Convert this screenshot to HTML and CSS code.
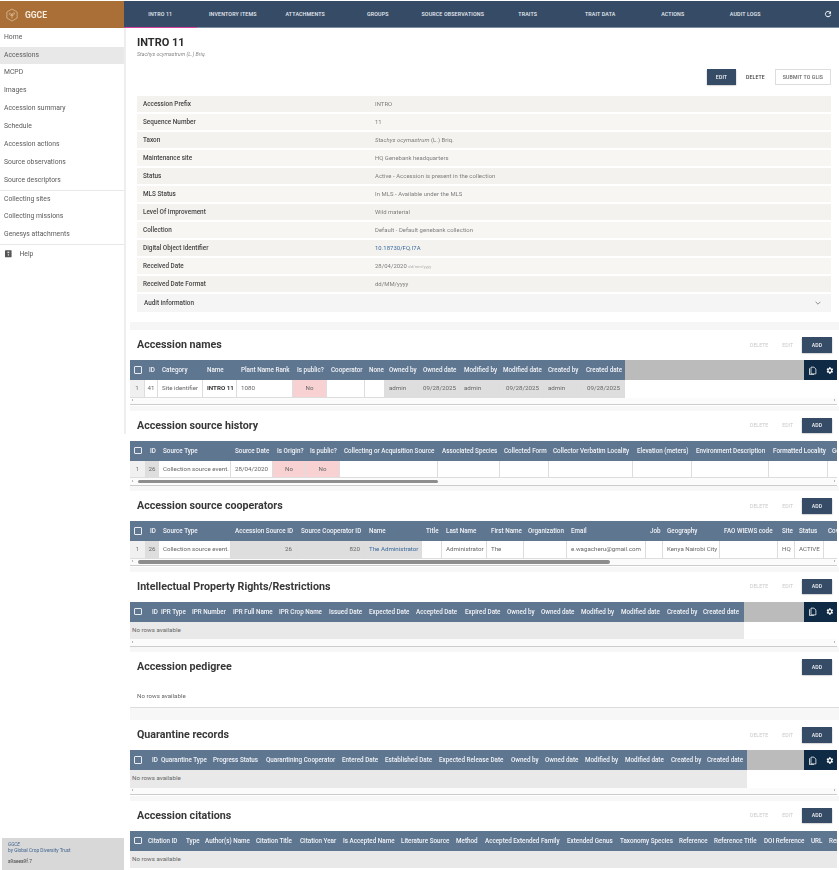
FILE: index.html
```html
<!DOCTYPE html>
<html lang="en">
<head>
<meta charset="utf-8">
<title>INTRO 11 - GGCE</title>
<link rel="stylesheet" href="styles.css">
</head>
<body>
<div class="app">
  <header class="topbar">
    <div class="brand">
      <svg class="brand-logo" viewBox="0 0 14 16"><path d="M7 1 13 4.500V11.500L7 15 1 11.500V4.500Z" fill="none" stroke="#e3c8a6" stroke-width=".8"/><path d="M7 12V6.500M7 9C5 9 4 7.500 4 6 6 6 7 7 7 9ZM7 8.500C9 8.500 10 7 10 5.500 8 5.500 7 6.500 7 8.500Z" fill="none" stroke="#e3c8a6" stroke-width=".7"/></svg>
      <span>GGCE</span>
    </div>
    <nav class="tabs">
      <a class="tab tab-active">INTRO 11</a>
      <a class="tab">INVENTORY ITEMS</a>
      <a class="tab">ATTACHMENTS</a>
      <a class="tab">GROUPS</a>
      <a class="tab tab-wide">SOURCE OBSERVATIONS</a>
      <a class="tab">TRAITS</a>
      <a class="tab">TRAIT DATA</a>
      <a class="tab">ACTIONS</a>
      <a class="tab">AUDIT LOGS</a>
      <svg class="refresh" viewBox="0 0 24 24"><path d="M19 8A8 8 0 1 0 20 14" fill="none" stroke="#fff" stroke-width="3"/><path d="M21 3v8h-8z" fill="#fff"/></svg>
    </nav>
  </header>
  <div class="body">
    <aside class="sidebar">
      <ul class="menu">
        <li class="item">Home</li>
        <li class="item item-active">Accessions</li>
        <li class="item">MCPD</li>
        <li class="item">Images</li>
        <li class="item">Accession summary</li>
        <li class="item">Schedule</li>
        <li class="item">Accession actions</li>
        <li class="item">Source observations</li>
        <li class="item">Source descriptors</li>
        <li class="item item-split">Collecting sites</li>
        <li class="item">Collecting missions</li>
        <li class="item">Genesys attachments</li>
        <li class="item item-split item-help">
          <svg class="help-icon" viewBox="0 0 8 8"><rect width="7" height="7.500" rx=".6" fill="#555"/><rect x="2.600" y="1.500" width="2" height="1.600" fill="#ddd"/><rect x="3" y="4.200" width="1.300" height="1.500" fill="#ddd"/></svg>
          Help
        </li>
      </ul>
      <div class="foot">
        <div class="foot-name">GGCE</div>
        <div class="foot-org">by Global Crop Diversity Trust</div>
        <div class="foot-ver">a9aeea9f.7</div>
      </div>
    </aside>
    <main class="main">
      <section class="summary">
        <h1 class="page-title">INTRO 11</h1>
        <div class="page-sub">Stachys ocymastrum (L.) Briq.</div>
        <div class="page-actions">
          <button class="btn btn-main btn-edit">EDIT</button>
          <button class="btn btn-text">DELETE</button>
          <button class="btn btn-line">SUBMIT TO GLIS</button>
        </div>
        <dl class="facts">
          <div class="fact"><dt>Accession Prefix</dt><dd>INTRO</dd></div>
          <div class="fact"><dt>Sequence Number</dt><dd>11</dd></div>
          <div class="fact"><dt>Taxon</dt><dd><i>Stachys ocymastrum</i> (L.) Briq.</dd></div>
          <div class="fact"><dt>Maintenance site</dt><dd>HQ Genebank headquarters</dd></div>
          <div class="fact"><dt>Status</dt><dd>Active - Accession is present in the collection</dd></div>
          <div class="fact"><dt>MLS Status</dt><dd>In MLS - Available under the MLS</dd></div>
          <div class="fact"><dt>Level Of Improvement</dt><dd>Wild material</dd></div>
          <div class="fact"><dt>Collection</dt><dd>Default - Default genebank collection</dd></div>
          <div class="fact"><dt>Digital Object Identifier</dt><dd class="link">10.18730/FQ.I7A</dd></div>
          <div class="fact"><dt>Received Date</dt><dd>28/04/2020 <small>dd/mm/yyyy</small></dd></div>
          <div class="fact"><dt>Received Date Format</dt><dd>dd/MM/yyyy</dd></div>
        </dl>
        <div class="audit">Audit information
          <svg class="chev" viewBox="0 0 10 6"><path d="M1 1l4 4 4-4" fill="none" stroke="#666" stroke-width="1.200"/></svg>
        </div>
      </section>

      <section class="panel">
        <div class="panel-bar"><h2>Accession names</h2><span class="off off-del">DELETE</span><span class="off">EDIT</span><button class="btn btn-main btn-add">ADD</button></div>
        <div class="tbl">
          <div class="row head cols-names">
            <div class="hc"><span class="check"></span></div><div class="hc">ID</div><div class="hc">Category</div><div class="hc">Name</div><div class="hc">Plant Name Rank</div><div class="hc">Is public?</div><div class="hc">Cooperator</div><div class="hc">None</div><div class="hc">Owned by</div><div class="hc">Owned date</div><div class="hc">Modified by</div><div class="hc">Modified date</div><div class="hc">Created by</div><div class="hc">Created date</div>
          </div>
          <div class="row cols-names">
            <div class="c num">1</div><div class="c mid">41</div><div class="c">Site identifier</div><div class="c strong">INTRO 11</div><div class="c">1080</div><div class="c no">No</div><div class="c"></div><div class="c"></div><div class="c ro">admin</div><div class="c ro end">09/28/2025</div><div class="c ro">admin</div><div class="c ro end">09/28/2025</div><div class="c ro">admin</div><div class="c ro end">09/28/2025</div>
          </div>
          <div class="tools"><svg viewBox="0 0 12 12"><path d="M4 1.500h4l2.500 2.500v6.500H4z" fill="none" stroke="#fff"/><path d="M2 3v8.500h6" fill="none" stroke="#fff"/></svg><svg viewBox="0 0 24 24"><path fill="#fff" d="M19.400 13a7.500 7.500 0 0 0 0-2l2.100-1.600-2-3.500-2.500 1a7.500 7.500 0 0 0-1.700-1L15 3.200h-4l-.4 2.700a7.500 7.500 0 0 0-1.700 1l-2.500-1-2 3.500L6.500 11a7.500 7.500 0 0 0 0 2l-2.100 1.600 2 3.500 2.500-1a7.500 7.500 0 0 0 1.700 1l.4 2.700h4l.4-2.700a7.500 7.500 0 0 0 1.700-1l2.500 1 2-3.500zM13 15.500a3.500 3.500 0 1 1 0-7 3.500 3.500 0 0 1 0 7z"/></svg></div>
        </div>
        <div class="sbar"><span class="arr arr-l"></span><span class="arr arr-r"></span></div>
      </section>

      <section class="panel">
        <div class="panel-bar"><h2>Accession source history</h2><span class="off off-del">DELETE</span><span class="off">EDIT</span><button class="btn btn-main btn-add">ADD</button></div>
        <div class="tbl">
          <div class="row head cols-history">
            <div class="hc"><span class="check"></span></div><div class="hc">ID</div><div class="hc">Source Type</div><div class="hc">Source Date</div><div class="hc">Is Origin?</div><div class="hc">Is public?</div><div class="hc">Collecting or Acquisition Source</div><div class="hc">Associated Species</div><div class="hc">Collected Form</div><div class="hc">Collector Verbatim Locality</div><div class="hc">Elevation (meters)</div><div class="hc">Environment Description</div><div class="hc">Formatted Locality</div><div class="hc">Geo</div>
          </div>
          <div class="row cols-history">
            <div class="c num">1</div><div class="c ro mid">26</div><div class="c">Collection source event.</div><div class="c">28/04/2020</div><div class="c no">No</div><div class="c no">No</div><div class="c"></div><div class="c"></div><div class="c"></div><div class="c"></div><div class="c"></div><div class="c"></div><div class="c"></div><div class="c"></div>
          </div>
        </div>
        <div class="sbar"><span class="arr arr-l"></span><span class="thumb thumb-history"></span><span class="arr arr-r"></span></div>
      </section>

      <section class="panel">
        <div class="panel-bar"><h2>Accession source cooperators</h2><span class="off off-del">DELETE</span><span class="off">EDIT</span><button class="btn btn-main btn-add">ADD</button></div>
        <div class="tbl">
          <div class="row head cols-coop">
            <div class="hc"><span class="check"></span></div><div class="hc">ID</div><div class="hc">Source Type</div><div class="hc">Accession Source ID</div><div class="hc">Source Cooperator ID</div><div class="hc">Name</div><div class="hc">Title</div><div class="hc">Last Name</div><div class="hc">First Name</div><div class="hc">Organization</div><div class="hc">Email</div><div class="hc">Job</div><div class="hc">Geography</div><div class="hc">FAO WIEWS code</div><div class="hc">Site</div><div class="hc">Status</div><div class="hc">Coverage</div>
          </div>
          <div class="row cols-coop">
            <div class="c num">1</div><div class="c ro mid">26</div><div class="c">Collection source event.</div><div class="c ro end">26</div><div class="c ro end">820</div><div class="c ro link">The Administrator</div><div class="c"></div><div class="c">Administrator</div><div class="c">The</div><div class="c"></div><div class="c">e.wagacheru@gmail.com</div><div class="c"></div><div class="c">Kenya Nairobi City</div><div class="c"></div><div class="c">HQ</div><div class="c">ACTIVE</div><div class="c"></div>
          </div>
        </div>
        <div class="sbar"><span class="arr arr-l"></span><span class="thumb thumb-coop"></span><span class="arr arr-r"></span></div>
      </section>

      <section class="panel">
        <div class="panel-bar"><h2>Intellectual Property Rights/Restrictions</h2><span class="off off-del">DELETE</span><span class="off">EDIT</span><button class="btn btn-main btn-add">ADD</button></div>
        <div class="tbl">
          <div class="row head cols-ipr">
            <div class="hc"><span class="check"></span></div><div class="hc">ID</div><div class="hc">IPR Type</div><div class="hc">IPR Number</div><div class="hc">IPR Full Name</div><div class="hc">IPR Crop Name</div><div class="hc">Issued Date</div><div class="hc">Expected Date</div><div class="hc">Accepted Date</div><div class="hc">Expired Date</div><div class="hc">Owned by</div><div class="hc">Owned date</div><div class="hc">Modified by</div><div class="hc">Modified date</div><div class="hc">Created by</div><div class="hc">Created date</div>
          </div>
          <div class="row cols-ipr"><div class="empty">No rows available</div></div>
          <div class="tools"><svg viewBox="0 0 12 12"><path d="M4 1.500h4l2.500 2.500v6.500H4z" fill="none" stroke="#fff"/><path d="M2 3v8.500h6" fill="none" stroke="#fff"/></svg><svg viewBox="0 0 24 24"><path fill="#fff" d="M19.400 13a7.500 7.500 0 0 0 0-2l2.100-1.600-2-3.500-2.500 1a7.500 7.500 0 0 0-1.700-1L15 3.200h-4l-.4 2.700a7.500 7.500 0 0 0-1.700 1l-2.500-1-2 3.500L6.500 11a7.500 7.500 0 0 0 0 2l-2.100 1.600 2 3.500 2.500-1a7.500 7.500 0 0 0 1.700 1l.4 2.700h4l.4-2.700a7.500 7.500 0 0 0 1.700-1l2.500 1 2-3.500zM13 15.500a3.500 3.500 0 1 1 0-7 3.500 3.500 0 0 1 0 7z"/></svg></div>
        </div>
        <div class="sbar"><span class="arr arr-l"></span><span class="arr arr-r"></span></div>
      </section>

      <section class="panel panel-plain">
        <div class="panel-bar"><h2>Accession pedigree</h2><button class="btn btn-main btn-add">ADD</button></div>
        <p class="plain-empty">No rows available</p>
      </section>

      <section class="panel">
        <div class="panel-bar"><h2>Quarantine records</h2><span class="off off-del">DELETE</span><span class="off">EDIT</span><button class="btn btn-main btn-add">ADD</button></div>
        <div class="tbl">
          <div class="row head cols-quar">
            <div class="hc"><span class="check"></span></div><div class="hc">ID</div><div class="hc">Quarantine Type</div><div class="hc">Progress Status</div><div class="hc">Quarantining Cooperator</div><div class="hc">Entered Date</div><div class="hc">Established Date</div><div class="hc">Expected Release Date</div><div class="hc">Owned by</div><div class="hc">Owned date</div><div class="hc">Modified by</div><div class="hc">Modified date</div><div class="hc">Created by</div><div class="hc">Created date</div>
          </div>
          <div class="row cols-quar"><div class="empty">No rows available</div></div>
          <div class="tools"><svg viewBox="0 0 12 12"><path d="M4 1.500h4l2.500 2.500v6.500H4z" fill="none" stroke="#fff"/><path d="M2 3v8.500h6" fill="none" stroke="#fff"/></svg><svg viewBox="0 0 24 24"><path fill="#fff" d="M19.400 13a7.500 7.500 0 0 0 0-2l2.100-1.600-2-3.500-2.500 1a7.500 7.500 0 0 0-1.700-1L15 3.200h-4l-.4 2.700a7.500 7.500 0 0 0-1.700 1l-2.500-1-2 3.500L6.500 11a7.500 7.500 0 0 0 0 2l-2.100 1.600 2 3.500 2.500-1a7.500 7.500 0 0 0 1.700 1l.4 2.700h4l.4-2.700a7.500 7.500 0 0 0 1.700-1l2.500 1 2-3.500zM13 15.500a3.500 3.500 0 1 1 0-7 3.500 3.500 0 0 1 0 7z"/></svg></div>
        </div>
        <div class="sbar"><span class="arr arr-l"></span><span class="arr arr-r"></span></div>
      </section>

      <section class="panel">
        <div class="panel-bar"><h2>Accession citations</h2><span class="off off-del">DELETE</span><span class="off">EDIT</span><button class="btn btn-main btn-add">ADD</button></div>
        <div class="tbl">
          <div class="row head cols-cite">
            <div class="hc"><span class="check"></span></div><div class="hc">Citation ID</div><div class="hc">Type</div><div class="hc">Author(s) Name</div><div class="hc">Citation Title</div><div class="hc">Citation Year</div><div class="hc">Is Accepted Name</div><div class="hc">Literature Source</div><div class="hc">Method</div><div class="hc">Accepted Extended Family</div><div class="hc">Extended Genus</div><div class="hc">Taxonomy Species</div><div class="hc">Reference</div><div class="hc">Reference Title</div><div class="hc">DOI Reference</div><div class="hc">URL</div><div class="hc">Remarks</div>
          </div>
          <div class="row cols-cite"><div class="empty">No rows available</div></div>
        </div>
      </section>
    </main>
  </div>
</div>
</body>
</html>
```
FILE: styles.css
```css
* { box-sizing: border-box; }
html, body { margin: 0; height: 870px; overflow: hidden; background: #fff; }
body { font-family: Roboto, "Liberation Sans", sans-serif; color: #555; }
.app { height: 870px; display: flex; flex-direction: column; filter: blur(.5px); }

.topbar { display: flex; height: 27px; margin-top: 1px; flex: none; }
.brand { width: 124px; background: #a96f37; display: flex; align-items: center; gap: 7px; padding-left: 6px; color: #f6ecdf; font-size: 8.500px; font-weight: 700; }
.brand-logo { width: 12px; height: 14px; }
.tabs { flex: 1; display: flex; background: #354b66; border-bottom: 1px solid #7d8ea3; position: relative; }
.tab { width: 72.500px; display: flex; align-items: center; justify-content: center; color: #e9edf2; font-size: 5.300px; font-weight: 500; letter-spacing: .15px; white-space: nowrap; padding-bottom: 1px; }
.tab-wide { width: 77.500px; }
.tab-active { border-bottom: 1.500px solid #d83f9a; margin-bottom: -1px; padding-bottom: 1px; }
.refresh { width: 8px; height: 8px; margin: 9px 7px 0 auto; }

.body { flex: 1; display: flex; min-height: 0; }
.sidebar { width: 124px; flex: none; display: flex; flex-direction: column; justify-content: space-between; }
.menu { list-style: none; margin: 0; padding: .7px 0 0; }
.item { height: 17.900px; line-height: 17.900px; padding-left: 4px; font-size: 6.800px; color: #5a5a5a; white-space: nowrap; }
.item-active { background: #e8e8e8; }
.item-split { border-top: 1px solid #e8e8e8; height: 18.500px; }
.item-help { display: flex; align-items: center; gap: 7px; padding-left: 5px; height: 20px; }
.help-icon { width: 7.500px; height: 8px; }
.foot { margin-left: 2px; height: 32px; background: #d8d8d8; padding: 4px 6px; font-size: 4.800px; line-height: 8px; color: #3f6490; }
.foot-name { font-style: italic; line-height: 5px; }
.foot-ver { color: #444; margin-top: 3px; }

.main { flex: 1; min-width: 0; padding-left: 6px; background: linear-gradient(#eee, #eee) 0 0 / 2px 406px no-repeat; }
.summary { padding: 8px 8px 10px 7px; border-bottom: 8px solid #f6f6f6; height: 302px; }
.page-title { margin: 0; font-size: 11px; line-height: 14px; font-weight: 700; color: #2c2c2c; }
.page-sub { font-size: 5.300px; line-height: 7px; margin-top: 1px; font-style: italic; color: #888; }
.page-actions { display: flex; justify-content: flex-end; align-items: center; margin: 11px 0 11.500px; height: 15.500px; }
.btn { font: 500 5.200px Roboto, sans-serif; border: 0; padding: 0; height: 15.500px; letter-spacing: .1px; }
.btn-main { background: #354b66; color: #f2f4f7; box-shadow: 0 .5px 1.500px rgba(0,0,0,.4); }
.btn-edit { width: 29px; }
.btn-text { width: 39px; background: none; color: #444; }
.btn-line { width: 56px; background: #fff; color: #666; border: 1px solid #ddd; }
.btn-add { width: 30px; margin-left: 9px; }
.facts { margin: 0; display: flex; flex-direction: column; gap: 2px; }
.fact { display: flex; height: 16px; align-items: center; background: #f7f6f3; padding-left: 6px; font-size: 5.900px; }
.fact:nth-child(odd) { background: #f3f2ee; }
.fact dt { width: 232px; flex: none; font-size: 6.400px; font-weight: 500; color: #444; }
.fact dd { margin: 0; color: #7d7d7d; letter-spacing: .05px; }
.fact small { font-size: 4px; color: #aaa; }
.link { color: #3b6a9b !important; }
.audit { height: 18px; margin-top: 2px; background: #f5f5f5; display: flex; align-items: center; justify-content: space-between; padding: 0 10px 0 7px; font-size: 6.400px; font-weight: 500; color: #444; }
.chev { width: 6px; height: 4px; }

.panel { height: 80.500px; border-bottom: 5.500px solid #f7f7f7; padding-top: 7px; }
.panel:last-child { border: 0; }
.panel-plain { height: 68px; border-bottom-width: 12px; }
.panel-plain::after { content: ""; display: block; height: 1px; background: #ddd; margin-top: 7.500px; }
.panel-bar { display: flex; align-items: center; height: 15.500px; margin-bottom: 7.500px; padding: 0 7px; }
.panel-bar h2 { margin: 0 auto 0 0; font-size: 10.700px; font-weight: 700; color: #383838; white-space: nowrap; }
.off { font-size: 5.200px; color: #c9c9c9; margin-left: 9px; }
.off-del { margin-left: 0; margin-right: 5px; }

.tbl { position: relative; width: 707px; overflow: hidden; }
.row { display: grid; }
.head { height: 20px; background: #bbb; }
.cols-names { grid-template-columns: 15px 13px 45px 34px 56px 34px 38px 20px 34px 41px 39px 45px 38px 43px; }
.cols-history { grid-template-columns: 16px 13px 72px 42px 33px 34px 98px 62px 49px 84px 59px 77px 59px 60px; }
.cols-coop { grid-template-columns: 16px 13px 72px 66px 68px 57px 20px 45px 37px 43px 79px 17px 57px 58px 17px 29px 50px; }
.cols-ipr { grid-template-columns: 19px 9px 31px 41px 46px 50px 40px 47px 49px 42px 34px 40px 40px 46px 36px 44px; }
.cols-quar { grid-template-columns: 19px 9px 52px 53px 76px 43px 54px 72px 34px 40px 40px 46px 36px 43px; }
.cols-cite { grid-template-columns: 15px 38px 19px 51px 44px 43px 58px 55px 29px 82px 53px 59px 35px 50px 47px 18px 74px; }
.hc { background: #5f7691; color: #f2f4f7; font-size: 6.300px; font-weight: 500; display: flex; align-items: center; padding-left: 3px; white-space: nowrap; overflow: hidden; }
.cols-names .hc, .cols-history .hc, .cols-coop .hc { padding-left: 4px; }
.hc:first-child { padding-left: 3px !important; }
.check { width: 7.500px; height: 7.500px; border: 1px solid #e8ecf1; border-radius: 1px; margin-left: 1px; flex: none; }
.c { height: 17.500px; line-height: 16.500px; font-size: 6.200px; padding: 0 4px; background: #fff; color: #666; border-right: 1px solid #ddd; border-bottom: 1px solid #ddd; white-space: nowrap; overflow: hidden; }
.num { background: #f0f0f0; text-align: center; color: #777; padding: 0; }
.mid { text-align: center; padding: 0; }
.end { text-align: right; }
.ro { background: #dedede; }
.no { background: #f8d2d2; text-align: center; }
.strong { font-weight: 700; color: #333; }
.empty { grid-column: 1 / -1; height: 17.500px; line-height: 17.500px; padding-left: 2px; font-size: 6.200px; background: #e9e9e9; color: #666; }
.tools { position: absolute; right: 0; top: 0; width: 33px; height: 20px; background: #0f2a44; display: flex; align-items: center; justify-content: space-between; padding: 0 3px 0 4px; }
.tools svg { width: 9px; height: 9px; }

.sbar { position: relative; width: 707px; height: 7.500px; border-bottom: 1px solid #ccc; background: #fbfbfb; }
.arr { position: absolute; top: 1.500px; width: 0; height: 0; border: 1.500px solid transparent; }
.arr-l { left: 1px; border-right-color: #777; }
.arr-r { right: 1px; border-left-color: #777; }
.thumb { position: absolute; left: 8px; top: 1.500px; height: 3.500px; border-radius: 2px; background: #8d8d8d; }
.thumb-history { width: 300px; }
.thumb-coop { width: 472px; }
.plain-empty { margin: 0; padding: 10.500px 7px 0; font-size: 6.200px; line-height: 7px; color: #666; }
```
